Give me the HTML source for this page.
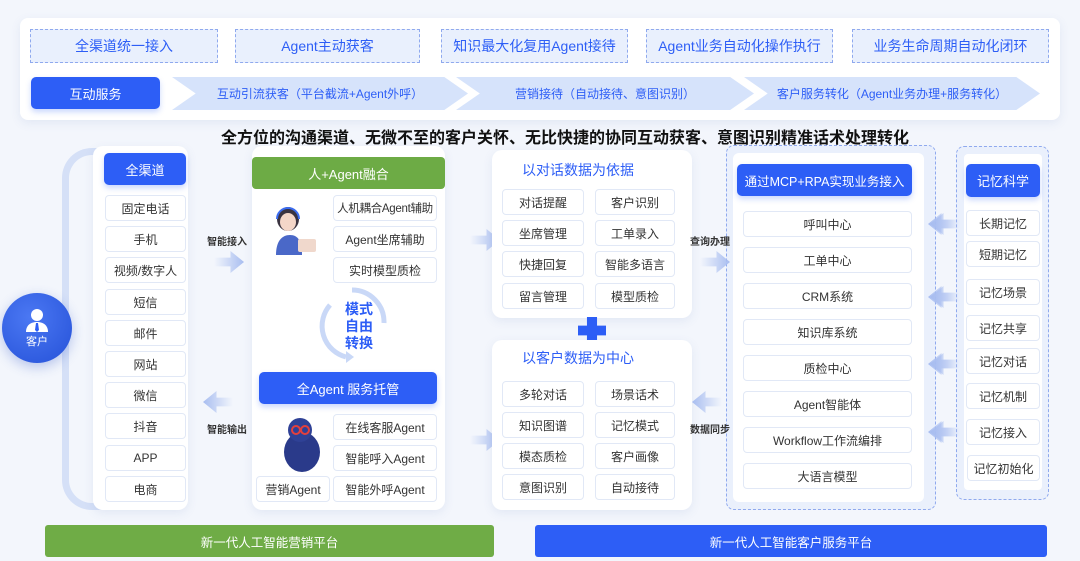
<!DOCTYPE html>
<html><head><meta charset="utf-8"><style>
*{margin:0;padding:0;box-sizing:border-box}
body{width:1080px;height:561px;background:#f3f6fc;position:relative;overflow:hidden;font-family:"Liberation Sans","Noto Sans CJK SC",sans-serif;color:#333}
.a{position:absolute}
.c{display:flex;align-items:center;justify-content:center;text-align:center;white-space:nowrap}
.card{background:#fff;border-radius:10px;box-shadow:0 3px 10px rgba(80,110,180,.10)}
.it{background:#fff;border:1px solid #e1e8f6;border-radius:4px;font-size:12px;color:#333;height:26px}
.blue{background:#2d5ef6;color:#fff;border-radius:5px;box-shadow:0 3px 6px rgba(45,94,246,.25)}
.dash{border:1px dashed #8fa9ee;background:#e9f0fd;color:#2d5ef6;font-size:14px}
.chev{background:#d6e3fb;color:#2d5ef6;font-size:12px;clip-path:polygon(0 0,92% 0,100% 50%,92% 100%,0 100%,8% 50%)}
.lbl{font-size:10px;font-weight:bold;color:#333;z-index:5;white-space:nowrap}
.arr{width:30px;height:22px;background:linear-gradient(90deg,rgba(160,185,240,0),#a8bdf0);clip-path:polygon(0 30%,55% 30%,55% 0,100% 50%,55% 100%,55% 70%,0 70%)}
.arl{transform:scaleX(-1)}
</style></head><body>
<div class="a card" style="left:20px;top:18px;width:1040px;height:102px;border-radius:8px"></div>
<div class="a c dash" style="left:30px;top:29px;width:188px;height:34px">全渠道统一接入</div>
<div class="a c dash" style="left:235px;top:29px;width:185px;height:34px">Agent主动获客</div>
<div class="a c dash" style="left:441px;top:29px;width:187px;height:34px">知识最大化复用Agent接待</div>
<div class="a c dash" style="left:646px;top:29px;width:187px;height:34px">Agent业务自动化操作执行</div>
<div class="a c dash" style="left:852px;top:29px;width:197px;height:34px">业务生命周期自动化闭环</div>
<div class="a c blue" style="left:31px;top:77px;width:129px;height:32px;font-size:13px">互动服务</div>
<div class="a c chev" style="left:172px;top:77px;width:296px;height:33px">互动引流获客（平台截流+Agent外呼）</div>
<div class="a c chev" style="left:456px;top:77px;width:298px;height:33px">营销接待（自动接待、意图识别）</div>
<div class="a c chev" style="left:744px;top:77px;width:296px;height:33px">客户服务转化（Agent业务办理+服务转化）</div>
<div class="a" style="left:0;top:124px;width:1130px;text-align:center;font-size:16px;font-weight:bold;color:#111">全方位的沟通渠道、无微不至的客户关怀、无比快捷的协同互动获客、意图识别精准话术处理转化</div>

<div class="a" style="left:62px;top:148px;width:40px;height:362px;border:7px solid #d5e0f7;border-right:none;border-radius:30px 0 0 30px"></div>
<div class="a c" style="left:2px;top:293px;width:70px;height:70px;border-radius:50%;background:radial-gradient(circle at 40% 35%,#4b78f3,#2551d8);box-shadow:0 4px 12px rgba(40,80,200,.3);flex-direction:column;color:#fff;font-size:11px">
<svg width="26" height="26" viewBox="0 0 26 26"><circle cx="13" cy="8" r="6" fill="#fff"/><path d="M2 25c0-7 5-10 11-10s11 3 11 10z" fill="#fff"/><path d="M12 16h2l1 7-2 2-2-2z" fill="#2d5ef6"/></svg>客户</div>

<div class="a card" style="left:93px;top:146px;width:95px;height:364px"></div>
<div class="a c blue" style="left:104px;top:153px;width:82px;height:32px;font-size:13px">全渠道</div>
<div class="a c it" style="left:105px;top:195px;width:81px">固定电话</div>
<div class="a c it" style="left:105px;top:226px;width:81px">手机</div>
<div class="a c it" style="left:105px;top:257px;width:81px">视频/数字人</div>
<div class="a c it" style="left:105px;top:289px;width:81px">短信</div>
<div class="a c it" style="left:105px;top:320px;width:81px">邮件</div>
<div class="a c it" style="left:105px;top:351px;width:81px">网站</div>
<div class="a c it" style="left:105px;top:382px;width:81px">微信</div>
<div class="a c it" style="left:105px;top:413px;width:81px">抖音</div>
<div class="a c it" style="left:105px;top:445px;width:81px">APP</div>
<div class="a c it" style="left:105px;top:476px;width:81px">电商</div>

<div class="a lbl" style="left:207px;top:233px">智能接入</div>
<div class="a arr" style="left:214px;top:251px"></div>
<div class="a arr arl" style="left:203px;top:391px"></div>
<div class="a lbl" style="left:207px;top:421px">智能输出</div>

<div class="a card" style="left:252px;top:146px;width:193px;height:364px"></div>
<div class="a c" style="left:252px;top:157px;width:193px;height:32px;background:#6dab45;color:#fff;font-size:13px;border-radius:4px">人+Agent融合</div>
<div class="a" style="left:268px;top:205px;width:50px;height:52px">
<svg width="50" height="52" viewBox="0 0 50 52"><ellipse cx="20" cy="14" rx="11" ry="12" fill="#3a3340"/><ellipse cx="20" cy="17" rx="8" ry="9" fill="#f4d6c8"/><path d="M8 50c0-14 6-20 14-20s12 6 12 20z" fill="#4a68c8"/><rect x="30" y="34" width="18" height="13" rx="2" fill="#f0d8cc"/><path d="M9 14a11 11 0 0 1 22 0" stroke="#3b6cf0" stroke-width="2" fill="none"/></svg></div>
<div class="a c it" style="left:333px;top:195px;width:104px;font-size:11.5px;letter-spacing:-0.3px">人机耦合Agent辅助</div>
<div class="a c it" style="left:333px;top:226px;width:104px">Agent坐席辅助</div>
<div class="a c it" style="left:333px;top:257px;width:104px">实时模型质检</div>
<svg class="a" style="left:310px;top:285px" width="80" height="80" viewBox="0 0 80 80"><path d="M42 5a32 32 0 0 1 32 33" stroke="#c9d8f7" stroke-width="5" fill="none"/><path d="M20 20a32 32 0 0 0 16 52" stroke="#c9d8f7" stroke-width="5" fill="none"/><path d="M36 78l8-6-8-6z" fill="#c9d8f7"/></svg>
<div class="a" style="left:345px;top:301px;font-size:14px;font-weight:bold;color:#2d5ef6;line-height:17px;text-align:center">模式<br>自由<br>转换</div>
<div class="a c blue" style="left:259px;top:372px;width:178px;height:32px;font-size:13px">全Agent 服务托管</div>
<div class="a" style="left:280px;top:416px;width:45px;height:58px">
<svg width="45" height="58" viewBox="0 0 45 58"><ellipse cx="22" cy="36" rx="18" ry="20" fill="#2a3a8a"/><circle cx="20" cy="14" r="12" fill="#2f4196"/><circle cx="16" cy="14" r="4" fill="none" stroke="#e4403c" stroke-width="2"/><circle cx="25" cy="14" r="4" fill="none" stroke="#e4403c" stroke-width="2"/></svg></div>
<div class="a c it" style="left:333px;top:414px;width:104px">在线客服Agent</div>
<div class="a c it" style="left:333px;top:445px;width:104px">智能呼入Agent</div>
<div class="a c it" style="left:333px;top:476px;width:104px">智能外呼Agent</div>
<div class="a c it" style="left:256px;top:476px;width:74px">营销Agent</div>

<div class="a arr" style="left:470px;top:229px"></div>
<div class="a arr" style="left:470px;top:429px"></div>

<div class="a card" style="left:492px;top:150px;width:200px;height:168px"></div>
<div class="a" style="left:492px;top:160px;width:172px;text-align:center;font-size:14px;color:#2d5ef6">以对话数据为依据</div>
<div class="a c it" style="left:502px;top:189px;width:82px">对话提醒</div>
<div class="a c it" style="left:595px;top:189px;width:80px">客户识别</div>
<div class="a c it" style="left:502px;top:220px;width:82px">坐席管理</div>
<div class="a c it" style="left:595px;top:220px;width:80px">工单录入</div>
<div class="a c it" style="left:502px;top:251px;width:82px">快捷回复</div>
<div class="a c it" style="left:595px;top:251px;width:80px">智能多语言</div>
<div class="a c it" style="left:502px;top:283px;width:82px">留言管理</div>
<div class="a c it" style="left:595px;top:283px;width:80px">模型质检</div>
<div class="a" style="left:578px;top:317px;width:28px;height:27px;background:#2d5ef6;clip-path:polygon(32% 0,68% 0,68% 32%,100% 32%,100% 68%,68% 68%,68% 100%,32% 100%,32% 68%,0 68%,0 32%,32% 32%)"></div>
<div class="a card" style="left:492px;top:340px;width:200px;height:170px"></div>
<div class="a" style="left:492px;top:348px;width:172px;text-align:center;font-size:14px;color:#2d5ef6">以客户数据为中心</div>
<div class="a c it" style="left:502px;top:381px;width:82px">多轮对话</div>
<div class="a c it" style="left:595px;top:381px;width:80px">场景话术</div>
<div class="a c it" style="left:502px;top:412px;width:82px">知识图谱</div>
<div class="a c it" style="left:595px;top:412px;width:80px">记忆模式</div>
<div class="a c it" style="left:502px;top:443px;width:82px">模态质检</div>
<div class="a c it" style="left:595px;top:443px;width:80px">客户画像</div>
<div class="a c it" style="left:502px;top:474px;width:82px">意图识别</div>
<div class="a c it" style="left:595px;top:474px;width:80px">自动接待</div>

<div class="a" style="left:726px;top:145px;width:210px;height:365px;border:1px dashed #8fa9ee;border-radius:8px;background:#eaf0fc"></div>
<div class="a" style="left:733px;top:153px;width:191px;height:349px;background:#fff;border-radius:6px"></div>
<div class="a c blue" style="left:737px;top:164px;width:175px;height:32px;font-size:12.5px">通过MCP+RPA实现业务接入</div>
<div class="a c it" style="left:743px;top:211px;width:169px">呼叫中心</div>
<div class="a c it" style="left:743px;top:247px;width:169px">工单中心</div>
<div class="a c it" style="left:743px;top:283px;width:169px">CRM系统</div>
<div class="a c it" style="left:743px;top:319px;width:169px">知识库系统</div>
<div class="a c it" style="left:743px;top:355px;width:169px">质检中心</div>
<div class="a c it" style="left:743px;top:391px;width:169px">Agent智能体</div>
<div class="a c it" style="left:743px;top:427px;width:169px">Workflow工作流编排</div>
<div class="a c it" style="left:743px;top:463px;width:169px">大语言模型</div>

<div class="a lbl" style="left:690px;top:233px">查询办理</div>
<div class="a arr" style="left:700px;top:251px;z-index:4"></div>
<div class="a arr arl" style="left:692px;top:391px;z-index:4"></div>
<div class="a lbl" style="left:690px;top:421px">数据同步</div>

<div class="a arr arl" style="left:928px;top:213px;z-index:4"></div>
<div class="a arr arl" style="left:928px;top:286px;z-index:4"></div>
<div class="a arr arl" style="left:928px;top:353px;z-index:4"></div>
<div class="a arr arl" style="left:928px;top:421px;z-index:4"></div>

<div class="a" style="left:956px;top:146px;width:93px;height:354px;border:1px dashed #8fa9ee;border-radius:8px;background:#eaf0fc"></div>
<div class="a" style="left:964px;top:154px;width:78px;height:336px;background:#fff;border-radius:4px"></div>
<div class="a c blue" style="left:966px;top:164px;width:74px;height:33px;font-size:13px">记忆科学</div>
<div class="a c it" style="left:966px;top:210px;width:74px">长期记忆</div>
<div class="a c it" style="left:966px;top:241px;width:74px">短期记忆</div>
<div class="a c it" style="left:966px;top:279px;width:74px">记忆场景</div>
<div class="a c it" style="left:966px;top:315px;width:74px">记忆共享</div>
<div class="a c it" style="left:966px;top:348px;width:74px">记忆对话</div>
<div class="a c it" style="left:966px;top:383px;width:74px">记忆机制</div>
<div class="a c it" style="left:966px;top:419px;width:74px">记忆接入</div>
<div class="a c it" style="left:967px;top:455px;width:73px">记忆初始化</div>

<div class="a arr arl" style="left:930px;top:213px;z-index:6"></div>
<div class="a arr arl" style="left:930px;top:286px;z-index:6"></div>
<div class="a arr arl" style="left:930px;top:353px;z-index:6"></div>
<div class="a arr arl" style="left:930px;top:421px;z-index:6"></div>

<div class="a c" style="left:45px;top:525px;width:449px;height:32px;background:#6fac46;color:#fff;font-size:12.5px;border-radius:3px">新一代人工智能营销平台</div>
<div class="a c" style="left:535px;top:525px;width:512px;height:32px;background:#2d5ef6;color:#fff;font-size:12.5px;border-radius:3px">新一代人工智能客户服务平台</div>
</body></html>
